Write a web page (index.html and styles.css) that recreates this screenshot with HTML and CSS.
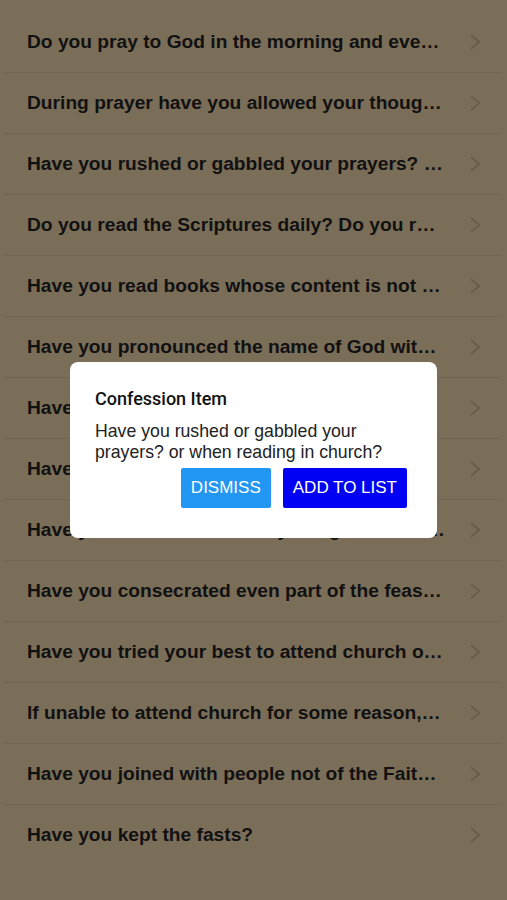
FILE: index.html
```html
<!DOCTYPE html>
<html lang="en">
<head>
  <meta charset="UTF-8" />
  <meta name="viewport" content="width=device-width, initial-scale=1" />
  <title>Confession</title>
  <link rel="stylesheet" href="styles.css">
</head>
<body>

<main class="list">
  <div class="row"><span>Do you pray to God in the morning and eve…</span><svg class="chev" viewBox="0 0 10 16"><polyline points="1,1 9,8 1,15" /></svg></div>
  <div class="row"><span>During prayer have you allowed your thoug…</span><svg class="chev" viewBox="0 0 10 16"><polyline points="1,1 9,8 1,15" /></svg></div>
  <div class="row"><span>Have you rushed or gabbled your prayers? …</span><svg class="chev" viewBox="0 0 10 16"><polyline points="1,1 9,8 1,15" /></svg></div>
  <div class="row"><span>Do you read the Scriptures daily? Do you r…</span><svg class="chev" viewBox="0 0 10 16"><polyline points="1,1 9,8 1,15" /></svg></div>
  <div class="row"><span>Have you read books whose content is not …</span><svg class="chev" viewBox="0 0 10 16"><polyline points="1,1 9,8 1,15" /></svg></div>
  <div class="row"><span>Have you pronounced the name of God wit…</span><svg class="chev" viewBox="0 0 10 16"><polyline points="1,1 9,8 1,15" /></svg></div>
  <div class="row"><span>Have you taken an oath or sworn a vow lig…</span><svg class="chev" viewBox="0 0 10 16"><polyline points="1,1 9,8 1,15" /></svg></div>
  <div class="row"><span>Have you taken part in spiritism or magic …</span><svg class="chev" viewBox="0 0 10 16"><polyline points="1,1 9,8 1,15" /></svg></div>
  <div class="row"><span>Have you worked on Sundays or great feast…</span><svg class="chev" viewBox="0 0 10 16"><polyline points="1,1 9,8 1,15" /></svg></div>
  <div class="row"><span>Have you consecrated even part of the feas…</span><svg class="chev" viewBox="0 0 10 16"><polyline points="1,1 9,8 1,15" /></svg></div>
  <div class="row"><span>Have you tried your best to attend church o…</span><svg class="chev" viewBox="0 0 10 16"><polyline points="1,1 9,8 1,15" /></svg></div>
  <div class="row"><span>If unable to attend church for some reason,…</span><svg class="chev" viewBox="0 0 10 16"><polyline points="1,1 9,8 1,15" /></svg></div>
  <div class="row"><span>Have you joined with people not of the Fait…</span><svg class="chev" viewBox="0 0 10 16"><polyline points="1,1 9,8 1,15" /></svg></div>
  <div class="row last"><span>Have you kept the fasts?</span><svg class="chev" viewBox="0 0 10 16"><polyline points="1,1 9,8 1,15" /></svg></div>
</main>

<div class="overlay">
  <div class="dialog">
    <h3>Confession Item</h3>
    <p>Have you rushed or gabbled your prayers? or when reading in church?</p>
    <div class="actions">
      <button class="dismiss">Dismiss</button>
      <button class="add">Add to list</button>
    </div>
  </div>
</div>

</body>
</html>
```

FILE: styles.css
```css
body {
  margin: 0;
  font-family: 'Liberation Sans', Arial, sans-serif;
  background-color: #7b6e59;
  color: #111;
}

.list {
  padding-top: 12px;
}

.row {
  height: 60px;
  margin: 0 6px 0 4px;
  padding: 0 21px 0 23px;
  display: flex;
  align-items: center;
  justify-content: space-between;
  border-bottom: 1px solid #6f6351;
}

.row.last {
  border-bottom: none;
}

.row span {
  font-size: 19.2px;
  font-weight: bold;
  white-space: nowrap;
  overflow: hidden;
}

.chev {
  width: 10px;
  height: 16px;
  flex-shrink: 0;
  fill: none;
  stroke: #645a4a;
  stroke-width: 1.6;
}

.overlay {
  position: fixed;
  top: 0;
  left: 0;
  width: 100%;
  height: 100%;
}

.dialog {
  position: absolute;
  top: 362px;
  left: 70px;
  width: 367px;
  height: 176px;
  box-sizing: border-box;
  background-color: white;
  border-radius: 8px;
  padding: 26px 30px 30px 25px;
}

.dialog h3 {
  margin: 0;
  font-family: Roboto, 'Liberation Sans', sans-serif;
  font-weight: 500;
  font-size: 18px;
  line-height: 21px;
  color: #111;
}

.dialog p {
  margin: 12px 0 5px;
  font-size: 17.7px;
  line-height: 21px;
  color: #222;
}

.actions {
  display: flex;
  justify-content: flex-end;
  gap: 12px;
}

.actions button {
  border: none;
  height: 40px;
  border-radius: 2px;
  color: white;
  font-family: 'Liberation Sans', Arial, sans-serif;
  font-size: 17px;
  text-transform: uppercase;
  padding: 0 10px;
}

.dismiss {
  background-color: #2196f3;
}

.add {
  background-color: #0000f5;
}
```
